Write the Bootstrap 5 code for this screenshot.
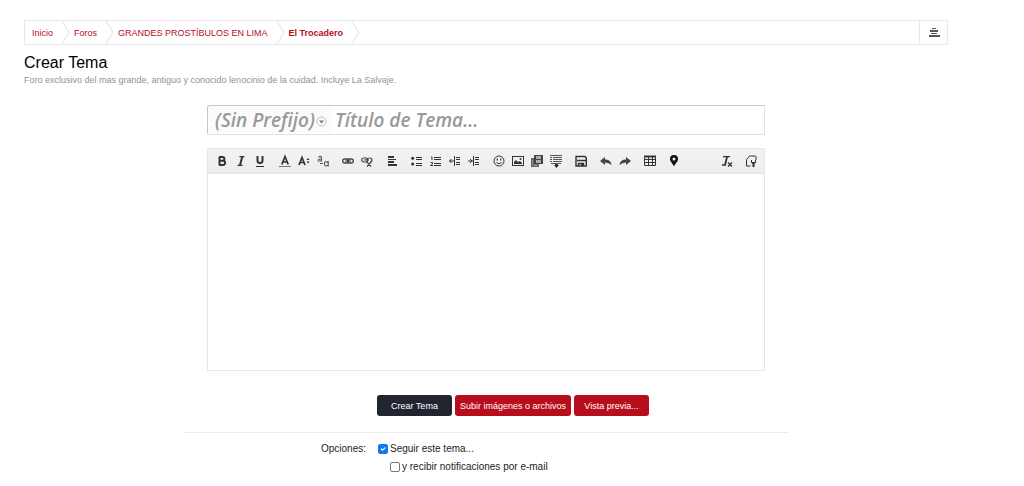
<!DOCTYPE html>
<html lang="es">
<head>
<meta charset="utf-8">
<meta name="viewport" content="width=device-width, initial-scale=1">
<title>Crear Tema</title>
<link href="https://cdn.jsdelivr.net/npm/bootstrap@5.3.0/dist/css/bootstrap.min.css" rel="stylesheet">
<style>
body{font-family:"Liberation Sans",Arial,sans-serif;font-size:9px;line-height:12px;color:#1c1d21;background:#fff}
.page{padding:20px 76px 8px 24px}
.crumb-bar{height:25px;border:1px solid #e6e8ea}
.crumb-bar a{color:#b50d1c;text-decoration:none;padding-left:7px}
.crumb-bar li+li a{padding-left:4px}
.crumb-bar ol svg{margin-left:8px;width:9px;height:23px}
.jump{width:28px;border:0;border-left:1px solid #e6e8ea;background:none;padding:0}
h1{font-size:16px;line-height:20px;margin:8px 0 1px}
.desc{color:#929292}
.form-area{max-width:604px;margin-top:19px}
.form-main{padding:0 23px}
.title-box{height:30px;border:1px solid #e0e0e0;border-top-color:#c8c8c8;border-left-color:#c8c8c8;border-radius:3px 0 0 3px;padding:1px}
.title-box,.title-box select,.title-box input{font-family:"Open Sans",sans-serif;font-weight:600;font-style:italic;font-size:19px;line-height:24px;color:#999}
.prefix-wrap{width:122px;background:#fbfbfb}
.prefix-wrap select{appearance:none;border:0;background:none;padding:0 0 0 6px;width:100%;height:26px;outline:0}
.prefix-wrap svg{position:absolute;right:4px;top:9px;pointer-events:none}
.title-box input{border:0;outline:0;padding:0 4px;background:none;min-width:0}
.title-box input::placeholder{color:#999;opacity:1}
.editor{border:1px solid #e4e8ea;margin-top:13px}
.tools{height:25px;background:linear-gradient(#f3f3f3,#ececec);border-bottom:1px solid #e4e4e4;padding:0 1px 0 4px}
.tools .grp{margin-right:6px}
.tools .grp:last-child{margin-right:0}
.tools .gap-end .tool{width:24px}
.tool{width:19px;height:24px;border:0;background:none;padding:0;color:#333;display:flex;align-items:center;justify-content:center}
.editor textarea{height:196px;border:0;outline:0;resize:none;padding:8px;font-size:11px}
.actions{gap:3px;margin-top:24px;padding-left:54px}
.act{height:21px;border:0;border-radius:3px;color:#fff;background:#b80d1b;padding:0 5px}
.act.main{background:#212530;width:75px}
.act.view{width:75px}
.options{border-top:1px solid #ececec;margin-top:16px;padding-top:9px;font-size:10px;line-height:14px}
.opt-label{width:182px;text-align:right}
.opts{margin-left:12px}
.opts .form-check-input{width:10px;height:10px;margin:0;border-radius:2px;border-color:#777;box-shadow:none}
.opts .form-check-input:checked{background-color:#1677f2;border-color:#1677f2}
.opts label{gap:2px}
.opts label+label{margin:4px 0 0 12px}
</style>
</head>
<body>
<main class="page">
<nav class="crumb-bar d-flex justify-content-between" aria-label="Ruta">
<ol class="list-unstyled d-flex align-items-center m-0">
<li class="d-flex align-items-center"><a href="#">Inicio</a><svg viewBox="0 0 9 24" preserveAspectRatio="none" fill="none" stroke="#dcdfe1"><path d="M1 0l7 12-7 12"/></svg></li>
<li class="d-flex align-items-center"><a href="#">Foros</a><svg viewBox="0 0 9 24" preserveAspectRatio="none" fill="none" stroke="#dcdfe1"><path d="M1 0l7 12-7 12"/></svg></li>
<li class="d-flex align-items-center"><a href="#">GRANDES PROSTÍBULOS EN LIMA</a><svg viewBox="0 0 9 24" preserveAspectRatio="none" fill="none" stroke="#dcdfe1"><path d="M1 0l7 12-7 12"/></svg></li>
<li class="d-flex align-items-center"><a href="#" class="fw-bold">El Trocadero</a><svg viewBox="0 0 9 24" preserveAspectRatio="none" fill="none" stroke="#dcdfe1"><path d="M1 0l7 12-7 12"/></svg></li>
</ol>
<button class="jump d-flex align-items-center justify-content-center" type="button" aria-label="Navegación rápida"><svg width="12" height="10" fill="#555"><path d="M4 0h4v1H4zM2 2h8v2H2zM3 5h6v1H3zM1 7h11v2H1z"/></svg></button>
</nav>
<h1 class="fw-normal text-black">Crear Tema</h1>
<p class="desc mb-0">Foro exclusivo del mas grande, antiguo y conocido lenocinio de la cuidad. Incluye La Salvaje.</p>
<form class="form-area mx-auto">
<div class="form-main">
<div class="title-box d-flex">
<div class="prefix-wrap position-relative flex-shrink-0">
<select aria-label="Prefijo"><option>(Sin Prefijo)</option></select>
<svg width="11" height="11" fill="none" stroke="#bbb"><circle cx="5.500" cy="5.500" r="4.500"/><path d="M3 4.500h5l-2.500 3z" fill="#777" stroke="none"/></svg>
</div>
<input class="flex-grow-1" type="text" placeholder="Título de Tema..." aria-label="Título de Tema">
</div>
<div class="editor">
<div class="tools d-flex" role="toolbar" aria-label="Formato">
<div class="grp d-flex">
<button class="tool" type="button" aria-label="Negrita"><svg width="14" height="14" fill="none" stroke="currentColor" stroke-width="2"><path d="M4.500 3v8M4 3h3.500a1.700 1.700 0 0 1 0 3.800H4M4 6.800h4a2 2 0 0 1 0 4.200H4"/></svg></button>
<button class="tool" type="button" aria-label="Cursiva"><svg width="14" height="14" fill="none" stroke="currentColor" stroke-width="1.300"><path d="M5.500 2.700h5M3.500 11.300h5"/><path d="M8.200 3L6 11" stroke-width="2"/></svg></button>
<button class="tool" type="button" aria-label="Subrayado"><svg width="14" height="14" fill="none" stroke="currentColor" stroke-width="2"><path d="M4.500 2v4.500q0 2.500 2.500 2.500t2.500-2.500V2"/><path d="M3 12.500h8" stroke-width="1"/></svg></button>
</div>
<div class="grp d-flex">
<button class="tool" type="button" aria-label="Color de texto"><svg width="14" height="14" fill="none" stroke="currentColor" stroke-width="1.700"><path d="M3.800 10.500L7 2.500 10.200 10.500M4.800 8h4.400"/><path d="M1 12.500h12" stroke="#777" stroke-width="1"/></svg></button>
<button class="tool" type="button" aria-label="Tamaño"><svg width="14" height="14" fill="none" stroke="currentColor" stroke-width="1.700"><path d="M2 11l3-7.500L8 11M3 8.500h4"/><path d="M9.500 6L11 4l1.500 2zM9.500 7.500L11 9.500l1.500-2z" fill="currentColor" stroke="none"/></svg></button>
<button class="tool" type="button" aria-label="Fuente"><svg width="14" height="14" fill="none" stroke="#555" stroke-width="1.100"><path d="M2.500 3q3-1.500 3 .8v3.700M5.500 5q-3.300-.2-3.300 1.300t3.300.5M4 9.500h3"/><path d="M12.200 7v5.500M12.200 8.500q-3.700-2-3.700 1.300t3.700 1.500"/></svg></button>
</div>
<div class="grp d-flex">
<button class="tool" type="button" aria-label="Enlace"><svg width="14" height="14" fill="none" stroke="#444" stroke-width="1.300"><rect x="1.700" y="5" width="6" height="4" rx="2"/><rect x="6.300" y="5" width="6" height="4" rx="2"/><path d="M4 7h6" stroke-width="1"/></svg></button>
<button class="tool" type="button" aria-label="Quitar enlace"><svg width="14" height="14" fill="none" stroke="#444" stroke-width="1.200"><rect x="1.700" y="4" width="6" height="4" rx="2"/><path d="M6.500 5.500q1-1.500 3-1.500 2.500 0 2.500 2t-2 2M4 6h5M7 8l4 4.500M11 8l-4 4.500"/></svg></button>
</div>
<div class="grp d-flex"><button class="tool" type="button" aria-label="Alinear"><svg width="14" height="14" fill="currentColor"><path d="M3 2h6v2H3zM3 5h8v1H3zM3 7h6v2H3zM3 10h9v2H3z"/></svg></button></div>
<div class="grp d-flex">
<button class="tool" type="button" aria-label="Lista"><svg width="14" height="14" fill="currentColor"><circle cx="2.700" cy="4.300" r="1.500"/><circle cx="2.700" cy="10" r="1.500"/><path d="M6 3h6v1H6zM6 5h6v1H6zM6 9h6v1H6zM6 11h6v1H6z"/></svg></button>
<button class="tool" type="button" aria-label="Lista numerada"><svg width="14" height="14" fill="none" stroke="currentColor"><path d="M2 3h1v3M1.500 8.500h2v1.500l-2 1.500h2.500M5 3.500h7M5 5.500h7M5 9.500h7M5 11.500h7"/></svg></button>
<button class="tool" type="button" aria-label="Reducir sangría"><svg width="14" height="14" fill="none" stroke="currentColor"><path d="M6.500 2v10M1.500 7h5M3.500 5l-2 2 2 2M8 3.500h4M8 5.500h4M8 8.500h4M8 10.500h4"/></svg></button>
<button class="tool" type="button" aria-label="Aumentar sangría"><svg width="14" height="14" fill="none" stroke="currentColor"><path d="M6.500 2v10M1 7h5M3 5l2 2-2 2M8 3.500h4M8 5.500h4M8 8.500h4M8 10.500h4"/></svg></button>
</div>
<div class="grp d-flex">
<button class="tool" type="button" aria-label="Emoticonos"><svg width="14" height="14" fill="none" stroke="currentColor"><circle cx="7" cy="7" r="5"/><path d="M4.500 8.500q2.500 2.500 5 0"/><path d="M5.300 4.500v2M8.700 4.500v2" stroke-width="1.200"/></svg></button>
<button class="tool" type="button" aria-label="Imagen"><svg width="14" height="14" fill="none" stroke="currentColor"><rect x="1.500" y="2.500" width="11" height="9"/><path d="M3 10V8l2-2 2 2 2-1 2 2v1z" fill="currentColor" stroke="none"/><circle cx="9.500" cy="5" r="1" fill="currentColor" stroke="none"/></svg></button>
<button class="tool" type="button" aria-label="Multimedia"><svg width="14" height="14"><path d="M1 4h8v9H1z" fill="#666"/><path d="M4 1h9v9H4z" fill="#444"/><path d="M6 2h5v3H6zM6 6h5v3H6zM2 6h1v1H2zM2 8h1v1H2zM2 10h1v1H2zM4 11h3v1H4z" fill="#aaa"/></svg></button>
<button class="tool" type="button" aria-label="Insertar"><svg width="14" height="14" fill="none" stroke="#555"><path d="M1 1.500h12M1 3.500h2M4 3.500h9M1 5.500h2M4 5.500h9M1 7.500h2M4 7.500h9M2 9.500h10"/><path d="M6 10h3v1h1l-2.500 3L5 11h1z" fill="#333" stroke="none"/></svg></button>
</div>
<div class="grp d-flex"><button class="tool" type="button" aria-label="Borradores"><svg width="14" height="14" fill="none" stroke="currentColor" stroke-width="1.400"><path d="M2 2.500h9L12.300 4v8H2z"/><path d="M3 6.500h9M4.500 12V9.500h5V12"/><path d="M7 10h2v2H7z" fill="currentColor" stroke="none"/></svg></button></div>
<div class="grp d-flex">
<button class="tool" type="button" aria-label="Deshacer"><svg width="14" height="14" fill="#444"><path d="M1 7l5-4v2.500q6 0 6.500 5.500Q10 8.500 6 8.500V11z"/></svg></button>
<button class="tool" type="button" aria-label="Rehacer"><svg width="14" height="14" fill="#444"><path d="M13 7L8 3v2.500q-6 0-6.500 5.500Q4 8.500 8 8.500V11z"/></svg></button>
</div>
<div class="grp d-flex"><button class="tool" type="button" aria-label="Tabla"><svg width="14" height="14" fill="none" stroke="currentColor"><path d="M1 2.500h12" stroke-width="2"/><path d="M1.500 2v9.500h11V2M1.500 5.500h11M1.500 8.500h11M5.500 3v9M9.500 3v9"/></svg></button></div>
<div class="grp d-flex"><button class="tool" type="button" aria-label="Ubicación"><svg width="14" height="14" fill="#111"><path fill-rule="evenodd" d="M6 1a4 4 0 0 1 4 4c0 3-2.500 4-4 7.500C4.500 9 2 8 2 5a4 4 0 0 1 4-4zm0 2.500A1.500 1.500 0 1 0 6 6.500 1.500 1.500 0 0 0 6 3.500z"/></svg></button></div>
<div class="grp gap-end d-flex ms-auto">
<button class="tool" type="button" aria-label="Quitar formato"><svg width="14" height="14" fill="none" stroke="currentColor" stroke-width="1.300"><path d="M3 2.700h7M2 11h4"/><path d="M7 3l-2 8" stroke-width="1.800"/><path d="M8 8.500l4 4M12 8.500l-4 4"/></svg></button>
<button class="tool" type="button" aria-label="Modo de editor"><svg width="14" height="14" fill="none" stroke="currentColor"><path d="M6.500 12H2.500V5.500l3-3.500h5.500q1 0 1 1v3"/><path d="M7 6v2.500l1.500 1.500V13h2v-3L12 8.500V6l-1 0v2H8V6z" fill="currentColor" stroke="none"/></svg></button>
</div>
</div>
<textarea class="w-100 d-block" aria-label="Mensaje"></textarea>
</div>
</div>
<div class="actions d-flex justify-content-center">
<button class="act main" type="submit">Crear Tema</button>
<button class="act" type="button">Subir imágenes o archivos</button>
<button class="act view" type="button">Vista previa...</button>
</div>
<div class="options d-flex">
<div class="opt-label flex-shrink-0">Opciones:</div>
<div class="opts">
<label class="d-flex align-items-center"><input class="form-check-input" type="checkbox" checked>Seguir este tema...</label>
<label class="d-flex align-items-center"><input class="form-check-input" type="checkbox">y recibir notificaciones por e-mail</label>
</div>
</div>
</form>
</main>
<script src="https://cdn.jsdelivr.net/npm/bootstrap@5.3.0/dist/js/bootstrap.bundle.min.js"></script>
</body>
</html>
